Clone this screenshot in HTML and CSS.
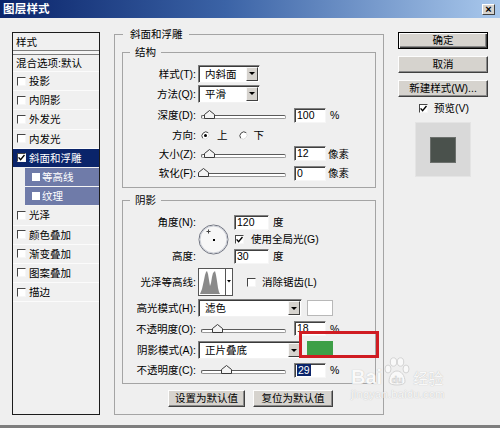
FILE: index.html
```html
<!DOCTYPE html>
<html>
<head>
<meta charset="utf-8">
<title>图层样式</title>
<link rel="stylesheet" href="styles.css">
</head>
<body>
<div class="dialog">
  <div class="titlebar">
    <span class="title">图层样式</span>
    <span class="close">×</span>
  </div>
  <div class="body">
    <div class="list">
      <div class="list-head">样式</div>
      <div class="list-sep"></div>
      <div class="list-blend">混合选项:默认</div>
      <div class="item"><span class="cb"></span>投影</div>
      <div class="item"><span class="cb"></span>内阴影</div>
      <div class="item"><span class="cb"></span>外发光</div>
      <div class="item"><span class="cb"></span>内发光</div>
      <div class="item selected"><span class="cb"><svg width="7" height="7" viewBox="0 0 7 7"><path d="M0.6 3.4 L2.6 5.6 L6.5 1" stroke="#000" stroke-width="1.4" fill="none"/></svg></span>斜面和浮雕</div>
      <div class="item sub"><span class="cb"></span>等高线</div>
      <div class="item sub"><span class="cb"></span>纹理</div>
      <div class="item"><span class="cb"></span>光泽</div>
      <div class="item"><span class="cb"></span>颜色叠加</div>
      <div class="item"><span class="cb"></span>渐变叠加</div>
      <div class="item"><span class="cb"></span>图案叠加</div>
      <div class="item"><span class="cb"></span>描边</div>
    </div>

    <div class="main">
      <fieldset class="group outer">
        <legend>斜面和浮雕</legend>

        <fieldset class="group inner structure">
          <legend>结构</legend>
          <div class="row r19">
            <span class="lbl">样式(T):</span>
            <div class="select w62"><span class="val">内斜面</span><span class="arrow"></span></div>
          </div>
          <div class="row r21">
            <span class="lbl">方法(Q):</span>
            <div class="select w62"><span class="val">平滑</span><span class="arrow"></span></div>
          </div>
          <div class="row r22">
            <span class="lbl">深度(D):</span>
            <div class="slider"><div class="track"></div><svg class="thumb" style="left:6px" width="11" height="9" viewBox="0 0 11 9"><path d="M0.5 8.5 V4.5 L5.5 0.5 L10.5 4.5 V8.5 Z" fill="#f4f4f4" stroke="#3a3a3a"/></svg></div>
            <span class="num">100</span><span class="unit">%</span>
          </div>
          <div class="row r18">
            <span class="lbl">方向:</span>
            <svg class="radio" width="9" height="9" viewBox="0 0 9 9"><circle cx="4.5" cy="4.5" r="4" fill="#fff"/><path d="M1.7 7.3 A4 4 0 0 1 7.3 1.7" stroke="#404040" fill="none"/><path d="M7.3 1.7 A4 4 0 0 1 1.7 7.3" stroke="#d8d8d8" fill="none"/><circle cx="4.5" cy="4.5" r="1.5" fill="#000"/></svg>
            <span class="opt first">上</span>
            <svg class="radio second" width="9" height="9" viewBox="0 0 9 9"><circle cx="4.5" cy="4.5" r="4" fill="#fff"/><path d="M1.7 7.3 A4 4 0 0 1 7.3 1.7" stroke="#404040" fill="none"/><path d="M7.3 1.7 A4 4 0 0 1 1.7 7.3" stroke="#d8d8d8" fill="none"/></svg>
            <span class="opt">下</span>
          </div>
          <div class="row r19">
            <span class="lbl">大小(Z):</span>
            <div class="slider"><div class="track"></div><svg class="thumb" style="left:6px" width="11" height="9" viewBox="0 0 11 9"><path d="M0.5 8.5 V4.5 L5.5 0.5 L10.5 4.5 V8.5 Z" fill="#f4f4f4" stroke="#3a3a3a"/></svg></div>
            <span class="num">12</span><span class="unit px">像素</span>
          </div>
          <div class="row r20">
            <span class="lbl">软化(F):</span>
            <div class="slider"><div class="track"></div><svg class="thumb" style="left:0px" width="11" height="9" viewBox="0 0 11 9"><path d="M0.5 8.5 V4.5 L5.5 0.5 L10.5 4.5 V8.5 Z" fill="#f4f4f4" stroke="#3a3a3a"/></svg></div>
            <span class="num">0</span><span class="unit px">像素</span>
          </div>
        </fieldset>

        <fieldset class="group inner shadow">
          <legend>阴影</legend>
          <div class="angle">
            <span class="lbl a-lbl1">角度(N):</span>
            <span class="lbl a-lbl2">高度:</span>
            <svg class="dial" width="31" height="31" viewBox="0 0 31 31">
              <circle cx="15.5" cy="15.5" r="14.5" fill="#f7f7f7" stroke="#6b6f7c"/>
              <circle cx="15.5" cy="15.5" r="13.5" fill="none" stroke="#c9ccd4"/>
              <path d="M10.5 5.5 V9.5 M8.5 7.5 H12.5" stroke="#444" stroke-width="1"/>
              <rect x="15" y="15" width="2" height="2" fill="#000"/>
            </svg>
            <div class="a-in1"><span class="num w35">120</span><span class="unit">度</span></div>
            <div class="a-cb"><span class="cb"><svg width="7" height="7" viewBox="0 0 7 7"><path d="M0.6 3.4 L2.6 5.6 L6.5 1" stroke="#000" stroke-width="1.4" fill="none"/></svg></span><span class="cb-text">使用全局光(G)</span></div>
            <div class="a-in2"><span class="num w35">30</span><span class="unit">度</span></div>
          </div>

          <div class="row contour-row">
            <span class="lbl">光泽等高线:</span>
            <svg class="contour" width="35" height="28" viewBox="0 0 35 28">
              <rect x="0.5" y="0.5" width="34" height="27" fill="#fff" stroke="#555"/>
              <path d="M2 26 L4 21 L6 12 L7 7 L8 4 L9 3 L10 6 L11 12 L12 18 L13 15 L14 9 L15 5 L16 4 L17 3 L18 7 L19 13 L20 20 L21 24 L22 26 Z" fill="#8a8a8a"/>
              <line x1="27.5" y1="1" x2="27.5" y2="27" stroke="#555"/>
              <path d="M29 12 H33 L31 14.5 Z" fill="#000"/>
            </svg>
            <span class="cb cb-anti"></span><span class="cb-text">消除锯齿(L)</span>
          </div>

          <div class="row r20">
            <span class="lbl">高光模式(H):</span>
            <div class="select w104"><span class="val">滤色</span><span class="arrow"></span></div>
            <span class="swatch white"></span>
          </div>
          <div class="row r21">
            <span class="lbl">不透明度(O):</span>
            <div class="slider"><div class="track"></div><svg class="thumb" style="left:14px" width="11" height="9" viewBox="0 0 11 9"><path d="M0.5 8.5 V4.5 L5.5 0.5 L10.5 4.5 V8.5 Z" fill="#f4f4f4" stroke="#3a3a3a"/></svg></div>
            <span class="num">18</span><span class="unit">%</span>
          </div>
          <div class="row r22">
            <span class="lbl">阴影模式(A):</span>
            <div class="select w104"><span class="val">正片叠底</span><span class="arrow"></span></div>
            <span class="swatch green"></span>
          </div>
          <div class="row r18">
            <span class="lbl">不透明度(C):</span>
            <div class="slider"><div class="track"></div><svg class="thumb" style="left:23px" width="11" height="9" viewBox="0 0 11 9"><path d="M0.5 8.5 V4.5 L5.5 0.5 L10.5 4.5 V8.5 Z" fill="#f4f4f4" stroke="#3a3a3a"/></svg></div>
            <span class="num"><span class="sel">29</span></span><span class="unit">%</span>
          </div>
        </fieldset>

        <div class="defaults">
          <span class="btn d1">设置为默认值</span>
          <span class="btn d2">复位为默认值</span>
        </div>
      </fieldset>
    </div>

    <div class="side">
      <span class="btn side-btn default">确定</span>
      <span class="btn side-btn">取消</span>
      <span class="btn side-btn">新建样式(W)...</span>
      <div class="preview-row"><span class="cb"><svg width="7" height="7" viewBox="0 0 7 7"><path d="M0.6 3.4 L2.6 5.6 L6.5 1" stroke="#000" stroke-width="1.4" fill="none"/></svg></span><span class="cb-text">预览(V)</span></div>
      <div class="preview"><div class="preview-swatch"></div></div>
    </div>
  </div>
  <div class="bottom-edge"></div>

  <div class="annotation"></div>

  <div class="watermark">
    <div class="wm-line">
      <span class="wm-bai">Bai</span>
      <svg class="wm-paw" width="28" height="30" viewBox="0 0 28 30">
        <g fill="#fbfbfb" stroke="#cfcfcf" stroke-width="1">
          <ellipse cx="5" cy="12" rx="3" ry="4"/>
          <ellipse cx="10.5" cy="5" rx="3.2" ry="4.2"/>
          <ellipse cx="17.5" cy="5" rx="3.2" ry="4.2"/>
          <ellipse cx="23" cy="12" rx="3" ry="4"/>
          <path d="M6 25 C6 18 10 14 14 14 C18 14 22 18 22 25 C22 29 6 29 6 25 Z"/>
        </g>
        <text x="14" y="26" text-anchor="middle" font-family="Liberation Sans" font-weight="bold" font-size="9" fill="#e9e9e9" stroke="#c4c4c4" stroke-width="0.4">du</text>
      </svg>
      <span class="wm-jy">经验</span>
    </div>
    <div class="wm-url">jingyan.baidu.com</div>
  </div>
</div>
</body>
</html>
```

FILE: styles.css
```css
* {
  box-sizing: border-box;
}

html, body {
  margin: 0;
  padding: 0;
}

body {
  width: 500px;
  height: 428px;
  overflow: hidden;
  background: #efefef;
  font-family: "Liberation Sans", "Noto Sans CJK SC", sans-serif;
  font-size: 10.5px;
  line-height: 14px;
  color: #000;
}

.dialog {
  position: relative;
  width: 500px;
  height: 428px;
  display: flex;
  flex-direction: column;
  background: #efefef;
}

/* title bar */
.titlebar {
  flex: none;
  height: 18px;
  margin-bottom: 1px;
  display: flex;
  align-items: center;
  justify-content: space-between;
  padding: 0 5px 0 3px;
  background: linear-gradient(to right, #0a246a 0%, #3b63a6 45%, #a9c8ec 100%);
}

.title {
  color: #fff;
  font-weight: bold;
  font-size: 11.5px;
  letter-spacing: 0.2px;
}

.close {
  width: 13px;
  height: 11px;
  background: #d6d3ce;
  border: 1px solid;
  border-color: #fff #404040 #404040 #fff;
  font: bold 11px/8px "Liberation Sans", sans-serif;
  text-align: center;
  color: #000;
}

.body {
  flex: 1;
  display: flex;
  align-items: flex-start;
}

.bottom-edge {
  flex: none;
  height: 3px;
  background: #7e7e7e;
}

/* left style list */
.list {
  flex: none;
  margin: 13px 0 0 12px;
  width: 88px;
  height: 383px;
  border: 1px solid #1c1c1c;
  background: #f0f0f0;
}

.list-head {
  height: 17px;
  line-height: 18px;
  padding-left: 3px;
}

.list-sep {
  height: 5px;
  border-top: 1px solid #7d7d7d;
  border-bottom: 1px solid #7d7d7d;
  background: #f4f4f4;
}

.list-blend {
  height: 17px;
  line-height: 17px;
  padding-left: 3px;
  border-bottom: 1px solid #fbfbfb;
}

.item {
  height: 19.2px;
  display: flex;
  align-items: center;
  padding-left: 4px;
  border-bottom: 1px solid #fbfbfb;
}

.cb {
  flex: none;
  width: 9px;
  height: 9px;
  margin-right: 3px;
  background: #fff;
  border: 1px solid;
  border-color: #454545 #f6f6f6 #f6f6f6 #454545;
  display: flex;
  align-items: center;
  justify-content: center;
}

.item.selected {
  background: #0a246a;
  color: #fff;
  border-bottom-color: #f0f0f0;
}

.item.sub {
  margin-left: 12px;
  padding-left: 7px;
  background: #6f7ba9;
  color: #fff;
  border-bottom-color: #f4f4f4;
}

.item.sub .cb {
  width: 8px;
  height: 8px;
  margin-right: 2px;
  border-color: #ffffff;
}

/* main area */
.main {
  flex: none;
  margin: 8px 0 0 14px;
  width: 270px;
}

fieldset {
  margin: 0;
  padding: 0;
  min-width: 0;
  border: 1px solid #a4a4a4;
}

legend {
  height: 14px;
  line-height: 14px;
  padding: 0 5px;
}

.outer {
  padding-bottom: 7px;
}

.outer > legend {
  margin-left: 8px;
  padding: 0 6px 0 7px;
}

.inner {
  margin: 0 7px;
}

.inner > legend {
  margin-left: 7px;
  padding: 0 5px;
}

.structure {
  margin-top: 4px;
  padding: 5px 0 4px;
}

.shadow {
  margin-top: 5px;
  padding: 6px 0 4px;
}

.row {
  display: flex;
  align-items: center;
}

.r18 { height: 18px; }
.r19 { height: 19px; }
.r20 { height: 20px; }
.r21 { height: 21px; }
.r22 { height: 22px; }

.lbl {
  flex: none;
  width: 75px;
  padding-right: 2px;
  text-align: right;
  white-space: nowrap;
}

/* dropdown */
.select {
  flex: none;
  display: flex;
  align-items: center;
  height: 18px;
  background: #fff;
  border: 1px solid;
  border-color: #7f7f7f #f2f2f2 #f2f2f2 #7f7f7f;
  box-shadow: inset 1px 1px 0 #3a3a3a;
}

.select .val {
  flex: 1;
  padding-left: 6px;
  white-space: nowrap;
}

.select .arrow {
  flex: none;
  width: 12px;
  height: 14px;
  margin-right: 1px;
  background: #d6d3ce;
  border: 1px solid;
  border-color: #f8f8f8 #404040 #404040 #f8f8f8;
  display: flex;
  align-items: center;
  justify-content: center;
}

.select .arrow::after {
  content: "";
  border-left: 3px solid transparent;
  border-right: 3px solid transparent;
  border-top: 3px solid #000;
}

.w62 { width: 62px; }
.w104 { width: 104px; }

/* slider */
.slider {
  flex: none;
  position: relative;
  width: 92px;
  height: 12px;
  padding: 6px 4px 0 3px;
}

.track {
  height: 4px;
  background: #fff;
  border: 1px solid;
  border-color: #5a5a5a #9a9a9a #9a9a9a #5a5a5a;
  border-radius: 2px;
}

.thumb {
  position: absolute;
  top: 1px;
  display: block;
}

/* numeric input */
.num {
  flex: none;
  width: 32px;
  height: 15px;
  margin-left: 4px;
  background: #fff;
  border: 1px solid;
  border-color: #808080 #f6f6f6 #f6f6f6 #808080;
  box-shadow: inset 1px 1px 0 #404040;
  padding-left: 2px;
  line-height: 13px;
  white-space: nowrap;
}

.num.w35 {
  width: 35px;
  margin-left: 0;
}

.num .sel {
  display: inline-block;
  height: 12px;
  line-height: 12px;
  padding: 0 1px;
  background: #0a246a;
  color: #fff;
}

.unit {
  margin-left: 4px;
}

.unit.px {
  margin-left: 2px;
}

/* radio */
.radio {
  flex: none;
  display: block;
  margin-left: 3px;
}

.radio.second {
  margin-left: 11px;
}

.opt {
  margin-left: 6px;
}

.opt.first {
  margin-left: 7px;
}

/* angle block */
.angle {
  display: grid;
  grid-template-columns: 75px 36px auto;
  grid-template-rows: 18px 16px 18px;
  align-items: center;
}

.a-lbl1 { grid-row: 1; grid-column: 1; }
.a-lbl2 { grid-row: 3; grid-column: 1; }

.dial {
  grid-row: 1 / 4;
  grid-column: 2;
  display: block;
  align-self: center;
}

.a-in1, .a-in2 {
  grid-column: 3;
  display: flex;
  align-items: center;
}

.a-in1 { grid-row: 1; }
.a-in2 { grid-row: 3; }

.a-cb {
  grid-row: 2;
  grid-column: 3;
  display: flex;
  align-items: center;
  padding-left: 1px;
}

.cb-text {
  margin-left: 4px;
  white-space: nowrap;
}

.contour-row {
  margin-top: 3px;
  height: 28px;
}

.contour {
  flex: none;
  display: block;
}

.cb-anti {
  margin-left: 14px;
  margin-right: 2px;
}

.swatch {
  flex: none;
  width: 26px;
  margin-left: 5px;
}

.swatch.white {
  height: 16px;
  background: #fff;
  border: 1px solid #b8b8b8;
}

.swatch.green {
  height: 15px;
  margin-top: -3px;
  background: #3e9f47;
}

.r20:has(.swatch.white) {
  margin-top: 2px;
}

/* default buttons */
.defaults {
  display: flex;
  justify-content: center;
  gap: 8px;
  margin-top: 6px;
  padding-left: 3px;
}

.btn {
  display: block;
  height: 17px;
  line-height: 15px;
  text-align: center;
  background: #d6d3ce;
  border: 1px solid;
  border-color: #fdfdfd #404040 #404040 #fdfdfd;
  box-shadow: inset -1px -1px 0 #8a8a8a;
  white-space: nowrap;
}

.d1 { width: 77px; }
.d2 { width: 80px; }

/* side column */
.side {
  flex: none;
  margin: 13px 0 0 14px;
  width: 90px;
  display: flex;
  flex-direction: column;
  align-items: center;
}

.side-btn {
  width: 90px;
  margin-bottom: 7px;
}

.side-btn.default {
  border: 1px solid #000;
  box-shadow: inset 1px 1px 0 #fdfdfd, inset -1px -1px 0 #404040, inset -2px -2px 0 #8a8a8a;
}

.preview-row {
  display: flex;
  align-items: center;
  height: 16px;
  margin-top: -4px;
  padding-left: 2px;
}

.preview-row .cb-text {
  margin-left: 3px;
}

.preview {
  margin-top: 6px;
  width: 56px;
  height: 55px;
  background: #d9d9d9;
  border: 1px solid #e4e4e4;
  display: flex;
  align-items: center;
  justify-content: center;
}

.preview-swatch {
  width: 26px;
  height: 26px;
  background: #4a514c;
  border: 1px solid #6c706d;
}

/* red annotation box over the shadow colour swatch */
.annotation {
  position: absolute;
  left: 299px;
  top: 331px;
  width: 80px;
  height: 27px;
  border: 3px solid #d01c22;
}

/* faint watermark */
.watermark {
  position: absolute;
  left: 351px;
  top: 355px;
  color: #fbfbfb;
  opacity: 0.85;
}

.wm-line {
  display: flex;
  align-items: flex-end;
  height: 32px;
}

.wm-bai {
  font: bold 20px/20px "Liberation Sans", sans-serif;
  text-shadow: 0 0 1px #a9a9a9;
}

.wm-paw {
  display: block;
  margin-left: 1px;
}

.wm-jy {
  margin-left: 2px;
  font-size: 15px;
  line-height: 17px;
  text-shadow: 0 0 1px #a9a9a9;
}

.wm-url {
  margin-top: 2px;
  font: 11px/11px "Liberation Sans", sans-serif;
  text-shadow: 0 0 1px #a9a9a9;
  letter-spacing: 0.3px;
}
```
